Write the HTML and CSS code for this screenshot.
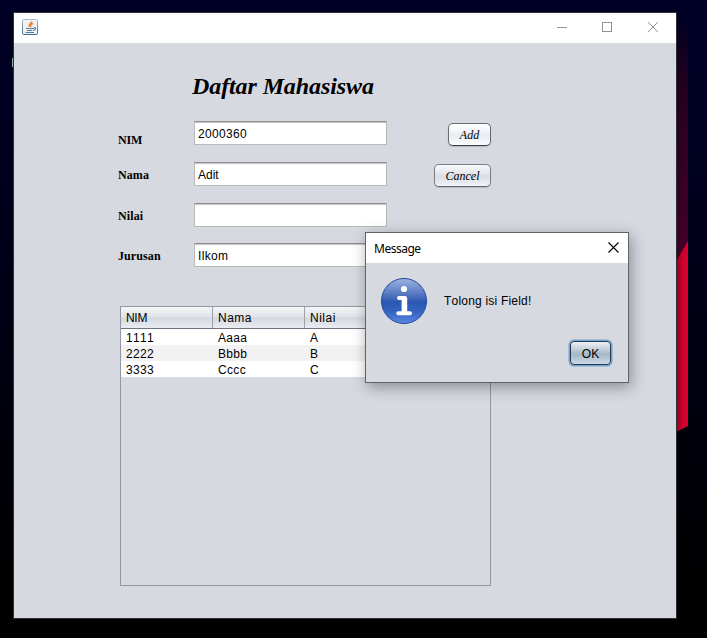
FILE: index.html
```html
<!DOCTYPE html>
<html lang="id">
<head>
<meta charset="utf-8">
<title>Daftar Mahasiswa</title>
<link rel="stylesheet" href="styles.css">
</head>
<body>
<svg class="wallpaper" width="31" height="638" viewBox="0 0 31 638">
  <defs>
    <linearGradient id="glow" x2="0" y2="1"><stop offset="0" stop-color="#3a0020" stop-opacity="0"/><stop offset=".35" stop-color="#2a0020"/><stop offset="1" stop-color="#48002a"/></linearGradient>
    <linearGradient id="red"><stop offset="0" stop-color="#b90027"/><stop offset=".6" stop-color="#d4002d"/><stop offset="1" stop-color="#d9002f"/></linearGradient>
  </defs>
  <path d="M0 20H12V241L0 261Z" fill="url(#glow)"/>
  <path d="M0 261L12 241V426L0 432Z" fill="url(#red)"/>
</svg>
<span class="desktop-mark"></span>
<main class="window">
  <header class="titlebar">
    <svg class="java" width="16" height="16" viewBox="0 0 16 16" fill="none">
      <defs><linearGradient id="jb" x2="0" y2="1"><stop stop-color="#a9bac8"/><stop offset="1" stop-color="#46677f"/></linearGradient></defs>
      <rect x=".5" y=".5" width="15" height="15" rx="1.2" fill="#eef1f5" stroke="url(#jb)"/>
      <path d="M9.7 2.5C10 4.5 6 5 7.2 8M11 4.5C8.2 5.3 8.2 6.5 9 8" stroke="#ed8125" stroke-width="1.5"/>
      <path d="M4 9.5H12M5 11.5H10M3.5 13.5H12M12 8.6C14.4 8.5 14 10.9 11 11.5" stroke="#527da1" stroke-width="1.1"/>
    </svg>
    <svg class="controls" width="102" height="12" viewBox="0 0 102 12" fill="none" stroke="#929292">
      <path d="M0 6.5H10"/><rect x="45.5" y="1.5" width="9" height="9"/><path d="M91 1L101 11M101 1L91 11"/>
    </svg>
  </header>
  <h1>Daftar Mahasiswa</h1>
  <form class="form">
    <label class="nim" for="nim">NIM</label><input id="nim" value="2000360"><button class="btn add" type="button">Add</button>
    <label for="nama">Nama</label><input id="nama" value="Adit"><button class="btn cancel" type="button">Cancel</button>
    <label for="nilai">Nilai</label><input id="nilai"><i></i>
    <label for="jurusan">Jurusan</label><input id="jurusan" value="Ilkom"><i></i>
  </form>
  <section class="table">
    <div class="row head"><span>NIM</span><span>Nama</span><span>Nilai</span><span>Jurusan</span></div>
    <div class="row"><span>1111</span><span>Aaaa</span><span>A</span><span></span></div>
    <div class="row"><span>2222</span><span>Bbbb</span><span>B</span><span></span></div>
    <div class="row"><span>3333</span><span>Cccc</span><span>C</span><span></span></div>
  </section>
</main>
<section class="dialog" role="dialog">
  <header class="dialog-title"><span>Message</span>
    <svg width="11" height="11" viewBox="0 0 11 11" stroke="#000" stroke-width="1.1"><path d="M.5 .5L10.5 10.5M10.5 .5L.5 10.5"/></svg>
  </header>
  <div class="message">
    <svg width="46" height="46" viewBox="0 0 46 46">
      <defs><linearGradient id="ib" x2="0" y2="1"><stop stop-color="#9db4df"/><stop offset=".45" stop-color="#4166b8"/><stop offset=".52" stop-color="#2b58b3"/><stop offset=".75" stop-color="#3564c1"/><stop offset="1" stop-color="#5b89e4"/></linearGradient></defs>
      <circle cx="23" cy="23" r="22.5" fill="url(#ib)" stroke="#23479a"/>
      <circle cx="23" cy="11" r="3.1" fill="#fff"/>
      <path d="M18 20H24V35M17.3 35.2H29" fill="none" stroke="#fff" stroke-width="4" stroke-linecap="round" stroke-linejoin="round"/>
      <path d="M23.4 20V35" stroke="#fff" stroke-width="5.6"/>
    </svg>
    <span>Tolong isi Field!</span>
  </div>
  <button class="ok" type="button">OK</button>
</section>
</body>
</html>
```
FILE: styles.css
```css
* { box-sizing: border-box; }
body {
  margin: 0;
  width: 707px;
  height: 638px;
  overflow: hidden;
  position: relative;
  padding: 12px 0 0 13px;
  background: linear-gradient(#000027 0, #000022 120px, #00001b 240px, #00000c 430px, #000 600px);
  font: 12px "Liberation Sans", Arial, sans-serif;
  font-kerning: none;
  color: #000;
}
svg { display: block; }
.wallpaper { position: absolute; left: 676px; top: 0; }
.desktop-mark { position: absolute; left: 12px; top: 58px; width: 1px; height: 9px; background: #9cc9bc; }
.window {
  position: relative;
  width: 664px;
  height: 607px;
  border: 1px solid #303138;
  background: #d6d9e0;
  box-shadow: 0 2px 10px rgba(0,0,0,.3);
}
.titlebar {
  height: 30px;
  background: #fff;
  display: flex;
  justify-content: space-between;
  padding: 6px 17px 0 8px;
}
.controls { margin-top: 2px; }
h1 {
  margin: 29px 0 0 178px;
  height: 49px;
  font: italic bold 24px/28px "Liberation Serif", "Times New Roman", serif;
  letter-spacing: -.1px;
  white-space: nowrap;
}
.form {
  display: grid;
  grid-template-columns: 76px 193px 1fr;
  grid-template-rows: 41px 41px 40px 24px;
  align-items: start;
  margin-left: 104px;
  width: 373px;
}
label { font: bold 12px/24px "Liberation Serif", "Times New Roman", serif; letter-spacing: .1px; padding-top: 1px; }
label.nim { padding-top: 7px; letter-spacing: -.2px; }
input {
  width: 193px;
  height: 24px;
  margin: 0;
  padding: 1px 3px 0 3px;
  border: 1px solid #b9b9b9;
  border-top-color: #8e8e8e;
  border-radius: 0;
  box-shadow: inset 0 2px 1px -1px #c4c4c4;
  background: #fff;
  color: #000;
  font: 12px "Liberation Sans", Arial, sans-serif;
  letter-spacing: .33px;
}
#nama { letter-spacing: 0; }
.btn {
  justify-self: end;
  margin: 2px 0 0;
  padding: 0;
  height: 23px;
  border: 1px solid #7b7f88;
  border-bottom-color: #62656d;
  border-radius: 5px;
  background: linear-gradient(#f7f8fa, #e4e7ec 40%, #d8dce3 52%, #f0f3f7);
  box-shadow: 0 1px 1px #b7bac3;
  color: #000;
  font: italic 12px/20px "Liberation Serif", "Times New Roman", serif;
}
.add { width: 43px; border-color: #686c76; border-bottom-color: #393c44; background: linear-gradient(#fff, #f1f3f6 40%, #e7eaf0 52%, #fcfdff); }
.cancel { width: 57px; }
.table {
  width: 371px;
  height: 280px;
  margin: 39px 0 0 106px;
  border: 1px solid #9297a1;
}
.row { display: grid; grid-template-columns: 92px 92px 92px 1fr; height: 16px; line-height: 19px; background: #fff; letter-spacing: .33px; }
.row span { padding-left: 5px; }
.row:nth-child(3) { background: #f2f2f2; }
.head {
  height: 22px;
  line-height: 23px;
  border-bottom: 1px solid #70747f;
  background: linear-gradient(#f4f5f7, #e2e4e9 45%, #d5d8de 52%, #e9ecf2);
}
.head span { height: 21px; border-right: 1px solid #9da1aa; letter-spacing: .5px; }
.head span:first-child { letter-spacing: -.3px; }
.head span:last-child { border: 0; }
.dialog {
  position: absolute;
  left: 365px;
  top: 232px;
  width: 264px;
  height: 151px;
  border: 1px solid #606369;
  background: #d6d9e0;
  box-shadow: 2px 4px 14px rgba(0,0,0,.36);
}
.dialog-title {
  height: 30px;
  background: #fff;
  padding: 0 10px 0 8px;
  display: flex;
  justify-content: space-between;
  align-items: center;
  font: 12px "Noto Sans", "Open Sans", sans-serif;
  letter-spacing: -.5px;
}
.dialog-title svg { margin: 0 -.5px 2px 0; }
.message { display: flex; align-items: center; gap: 17px; padding: 15px 0 0 15px; letter-spacing: .2px; }
.ok {
  display: block;
  margin: 17px 0 0 204px;
  padding: 1px 0 0;
  width: 41px;
  height: 24px;
  border: 1px solid #263b4e;
  border-radius: 4px;
  background: linear-gradient(#edf1f5, #bac8d4 40%, #a5b7c6 55%, #c9dbe9);
  box-shadow: 0 0 0 1.5px #73a4d1;
  color: #000;
  font: 12px/20px "Liberation Sans", Arial, sans-serif;
}
```
